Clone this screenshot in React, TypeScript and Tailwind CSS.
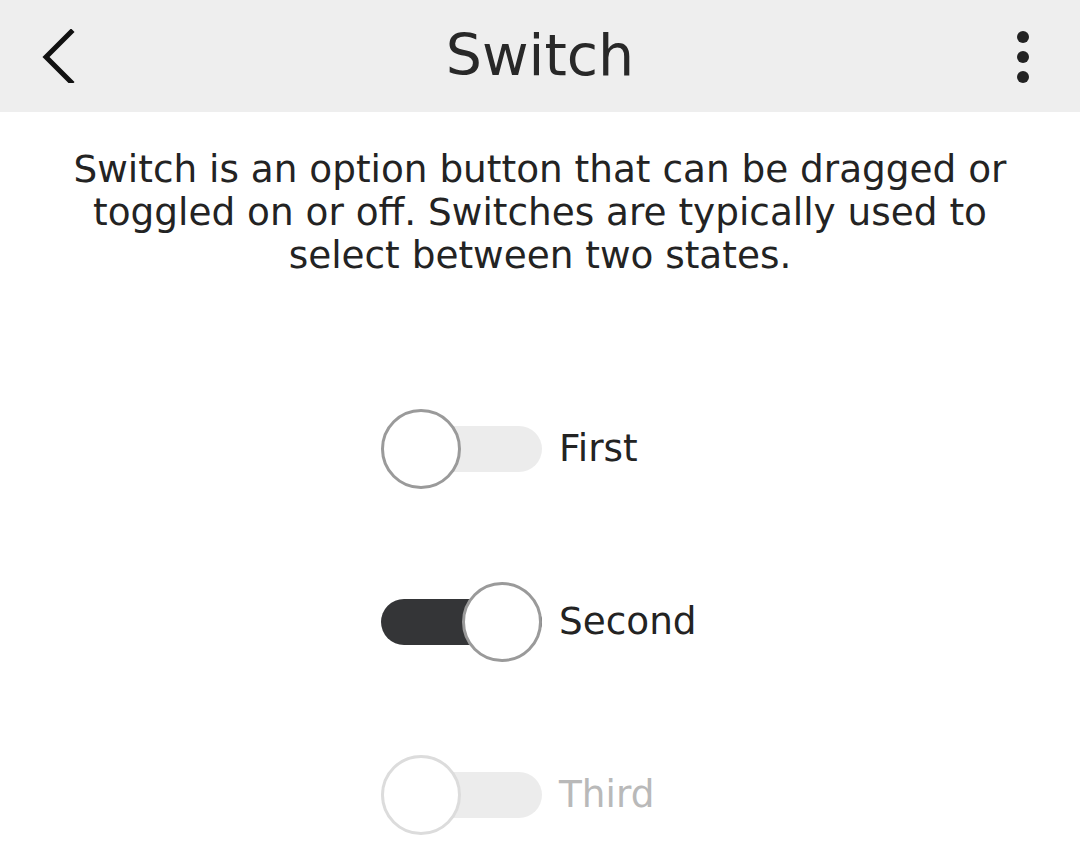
type SwitchRowProps = {
  label: string;
  on?: boolean;
  disabled?: boolean;
};

function SwitchRow({ label, on = false, disabled = false }: SwitchRowProps) {
  return (
    <div className="flex items-center h-[80px]">
      <div className="relative w-[161px] h-[80px] flex items-center">
        <div
          className={
            on
              ? 'w-[161px] h-[46px] rounded-full bg-[#343537]'
              : 'w-[161px] h-[46px] rounded-full bg-[#ececec]'
          }
        />
        <div
          className={
            'absolute top-0 w-[80px] h-[80px] rounded-full bg-white border-[3px] ' +
            (on ? 'left-[81px] ' : 'left-0 ') +
            (disabled ? 'border-[#dcdcdc]' : 'border-[#9a9a9a]')
          }
        />
      </div>
      <span
        className={
          'ml-[17px] text-[37.4px] leading-none ' +
          (disabled ? 'text-[#b9b9b9]' : 'text-[#232323]')
        }
      >
        {label}
      </span>
    </div>
  );
}

export default function App() {
  return (
    <div
      className="w-[1080px] h-[850px] bg-white overflow-hidden"
      style={{ fontFamily: '"DejaVu Sans", sans-serif' }}
    >
      <header className="h-[112px] bg-[#eeeeee] flex items-center">
        <div className="w-[200px] flex items-center pl-[40px]">
          <svg width="36" height="54" viewBox="0 0 36 54">
            <path
              d="M31 3 L6 28 L31 53"
              fill="none"
              stroke="#111"
              strokeWidth="5"
              strokeLinecap="square"
            />
          </svg>
        </div>
        <h1 className="flex-1 text-center text-[57px] leading-none text-[#282828] -mt-[2px]">
          Switch
        </h1>
        <div className="w-[200px] flex items-center justify-end pr-[51px]">
          <svg width="12" height="54" viewBox="0 0 12 54">
            <circle cx="6" cy="8" r="6" fill="#222" />
            <circle cx="6" cy="28" r="6" fill="#222" />
            <circle cx="6" cy="48" r="6" fill="#222" />
          </svg>
        </div>
      </header>

      <p className="mt-[36px] text-center text-[37.4px] leading-[43px] text-[#232323]">
        Switch is an option button that can be dragged or
        <br />
        toggled on or off. Switches are typically used to
        <br />
        select between two states.
      </p>

      <div className="mt-[132px] flex flex-col gap-[93px] pl-[381px]">
        <SwitchRow label="First" />
        <SwitchRow label="Second" on />
        <SwitchRow label="Third" disabled />
      </div>
    </div>
  );
}
